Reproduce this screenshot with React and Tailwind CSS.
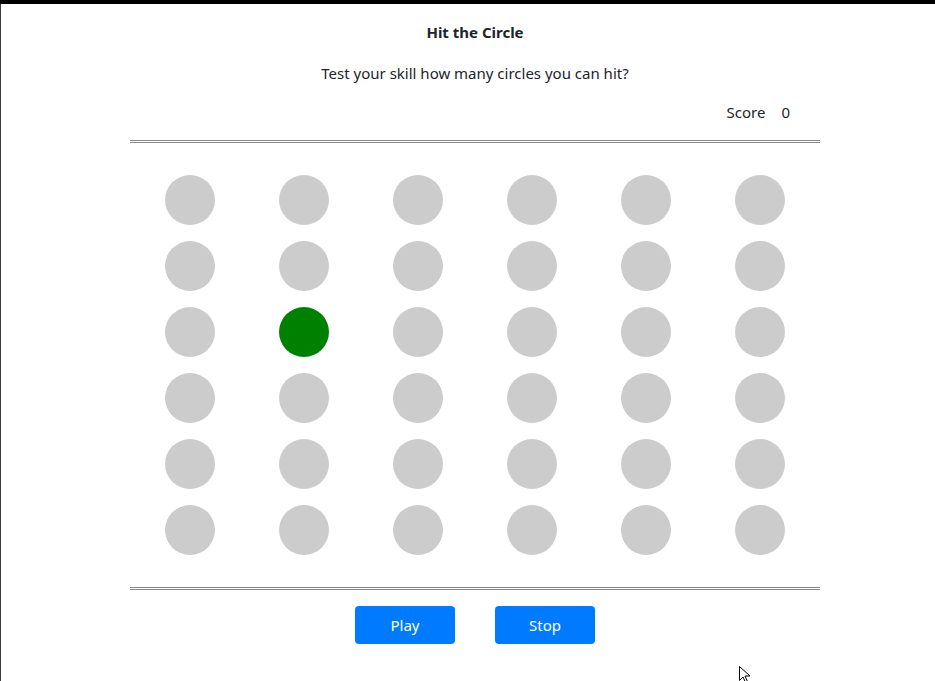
const ROWS = 6
const COLS = 6
const ACTIVE = 2 * COLS + 1

function Circle({ active }) {
  return (
    <div className="flex h-[50px] items-center justify-center">
      <span className={`block h-[50px] w-[50px] rounded-full ${active ? 'bg-[#008000]' : 'bg-[#cccccc]'}`} />
    </div>
  )
}

export default function App() {
  const cells = Array.from({ length: ROWS * COLS }, (_, i) => i)

  return (
    <div className="relative h-[681px] w-[935px] overflow-hidden bg-white font-['Noto_Sans',sans-serif] text-[#212529]">
      <div className="h-1 bg-black" />
      <div className="absolute left-0 top-1 h-full w-px bg-[#3a3a3a]" />

      <div className="ml-[130px] w-[690px]">
        <h1 className="mt-[18px] text-center text-[15px] font-bold leading-5">Hit the Circle</h1>
        <p className="mt-[21px] text-center text-[15px] leading-5">Test your skill how many circles you can hit?</p>
        <div className="mt-[19px] flex justify-end gap-4 pr-[30px] text-[15px] leading-5">
          <span>Score</span>
          <span>0</span>
        </div>

        <div className="mt-[18px] border-t-[3px] border-double border-[#888888]" />

        <div className="ml-[3px] mt-[32px] grid w-[684px] grid-cols-6 gap-y-4">
          {cells.map(i => (
            <Circle key={i} active={i === ACTIVE} />
          ))}
        </div>

        <div className="mt-[32px] border-t-[3px] border-double border-[#888888]" />

        <div className="mt-[16px] flex justify-center gap-10">
          <button className="h-[38px] w-[100px] rounded bg-[#007bff] text-[15px] text-white">Play</button>
          <button className="h-[38px] w-[100px] rounded bg-[#007bff] text-[15px] text-white">Stop</button>
        </div>
      </div>

      <svg className="absolute left-[739px] top-[666px] h-[17px] w-[12px]" viewBox="0 0 12 17" aria-hidden>
        <path d="M0.5 0.5 L0.5 14.5 L4 11 L6.5 16.5 L8.5 15.5 L6 10 L11 10 Z" fill="white" stroke="black" strokeWidth="1" />
      </svg>
    </div>
  )
}
